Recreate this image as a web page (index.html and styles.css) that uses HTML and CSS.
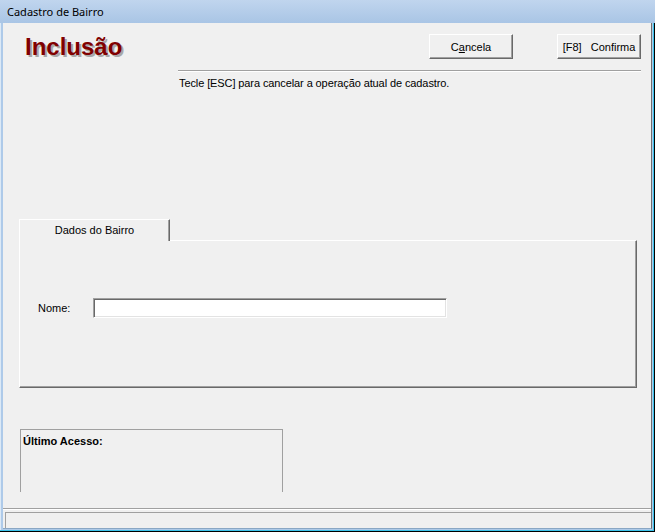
FILE: index.html
```html
<!DOCTYPE html>
<html>
<head>
  <title>Cadastro de Bairro</title>
  <link rel="stylesheet" href="styles.css">
</head>
<body>
  <div class="window">
    <div class="titlebar">Cadastro de Bairro</div>
    <div class="frame">
      <div class="client">
        <div class="header">
          <h1 class="mode">Inclusão</h1>
          <div class="actions">
            <button class="btn">C<u>a</u>ncela</button>
            <button class="btn">[F8]&nbsp;&nbsp; Confirma</button>
          </div>
        </div>
        <div class="rule"></div>
        <p class="hint">Tecle [ESC] para cancelar a operação atual de cadastro.</p>

        <div class="tabs">
          <div class="tab">Dados do Bairro</div>
        </div>
        <div class="tab-panel">
          <label class="field">
            <span class="field-label">Nome:</span>
            <input class="text-input" type="text">
          </label>
        </div>

        <div class="groupbox">
          <strong>Último Acesso:</strong>
        </div>

        <div class="status-sep"></div>
        <div class="statusbar"></div>
      </div>
    </div>
  </div>
</body>
</html>
```

FILE: styles.css
```css
html, body {
  margin: 0;
  padding: 0;
  background: #f0f0f0;
}
.window {
  width: 655px;
  height: 532px;
  box-sizing: border-box;
  display: flex;
  flex-direction: column;
  background: #aecae9;
  box-shadow: inset -1px -1px 0 #000, inset -2px -2px 0 #3cc3ea, inset 1px 0 0 #dce9f6;
  font-family: "Liberation Sans", Arial, sans-serif;
  font-size: 11px;
  color: #000;
}
.titlebar {
  height: 23px;
  box-sizing: border-box;
  padding: 4px 0 0 7px;
  background: linear-gradient(#c0d5ee, #a9c5e5);
  font-family: "Noto Sans", "DejaVu Sans", sans-serif;
  font-size: 11px;
  line-height: 16px;
  color: #000;
}
.frame {
  flex: 1;
  display: flex;
  padding: 0 3px 3px 3px;
}
.client {
  flex: 1;
  display: flex;
  flex-direction: column;
  background: #f0f0f0;
  border-right: 1px solid #6f6f6f;
  border-bottom: 1px solid #8aa7c4;
}

/* header */
.header {
  display: flex;
  justify-content: space-between;
  margin-top: 11px;
  height: 25px;
}
.mode {
  margin: 0;
  padding-left: 22px;
  font-family: "Liberation Sans", Arial, sans-serif;
  font-size: 24px;
  line-height: 25px;
  font-weight: bold;
  color: #800000;
  text-shadow: 2px 2px 0 #a8a8a8;
}
.actions {
  display: flex;
  gap: 44px;
  margin-right: 10px;
}
.btn {
  width: 84px;
  height: 25px;
  padding: 0;
  font-family: "Liberation Sans", Arial, sans-serif;
  font-size: 11px;
  color: #000;
  background: #f0f0f0;
  border-top: 1px solid #fff;
  border-left: 1px solid #fff;
  border-right: 1px solid #696969;
  border-bottom: 1px solid #696969;
  box-shadow: inset -1px -1px 0 #a0a0a0;
  border-radius: 0;
}
.rule {
  margin: 11px 10px 0 175px;
  border-top: 1px solid #a0a0a0;
  border-bottom: 1px solid #fff;
}
.hint {
  margin: 4px 0 0 0;
  padding-left: 176px;
  line-height: 14px;
  letter-spacing: -0.1px;
}

/* tab */
.tabs {
  display: flex;
  margin: 129px 0 0 16px;
}
.tab {
  position: relative;
  z-index: 1;
  width: 151px;
  height: 22px;
  box-sizing: border-box;
  margin-bottom: -1px;
  padding-top: 4px;
  text-align: center;
  background: #f0f0f0;
  border-top: 1px solid #fff;
  border-left: 1px solid #fff;
  border-right: 1px solid #696969;
  box-shadow: inset -1px 0 0 #a0a0a0;
}
.tab-panel {
  width: 618px;
  height: 148px;
  box-sizing: border-box;
  margin-left: 16px;
  border-top: 1px solid #fff;
  border-left: 1px solid #fff;
  border-right: 1px solid #696969;
  border-bottom: 1px solid #696969;
  box-shadow: inset -1px -1px 0 #a0a0a0;
  padding: 57px 0 0 18px;
}
.field {
  display: flex;
  align-items: center;
}
.field-label {
  width: 55px;
}
.text-input {
  width: 354px;
  height: 20px;
  box-sizing: border-box;
  margin: 0;
  padding: 0 3px;
  background: #fff;
  border-top: 1px solid #a0a0a0;
  border-left: 1px solid #a0a0a0;
  border-right: 1px solid #fff;
  border-bottom: 1px solid #fff;
  box-shadow: inset 1px 1px 0 #696969, inset -1px -1px 0 #e3e3e3;
  outline: none;
}

/* last access */
.groupbox {
  width: 263px;
  height: 63px;
  box-sizing: border-box;
  margin: 41px 0 0 17px;
  padding: 4px 0 0 2px;
  border-top: 1px solid #a0a0a0;
  border-left: 1px solid #a0a0a0;
  border-right: 1px solid #a0a0a0;
  line-height: 14px;
}

/* status bar */
.status-sep {
  margin-top: 16px;
  border-top: 1px solid #a0a0a0;
  border-bottom: 1px solid #fff;
}
.statusbar {
  flex: 1;
  margin: 2px 0 0 2px;
  border-top: 1px solid #a0a0a0;
  border-left: 1px solid #a0a0a0;
}
```
